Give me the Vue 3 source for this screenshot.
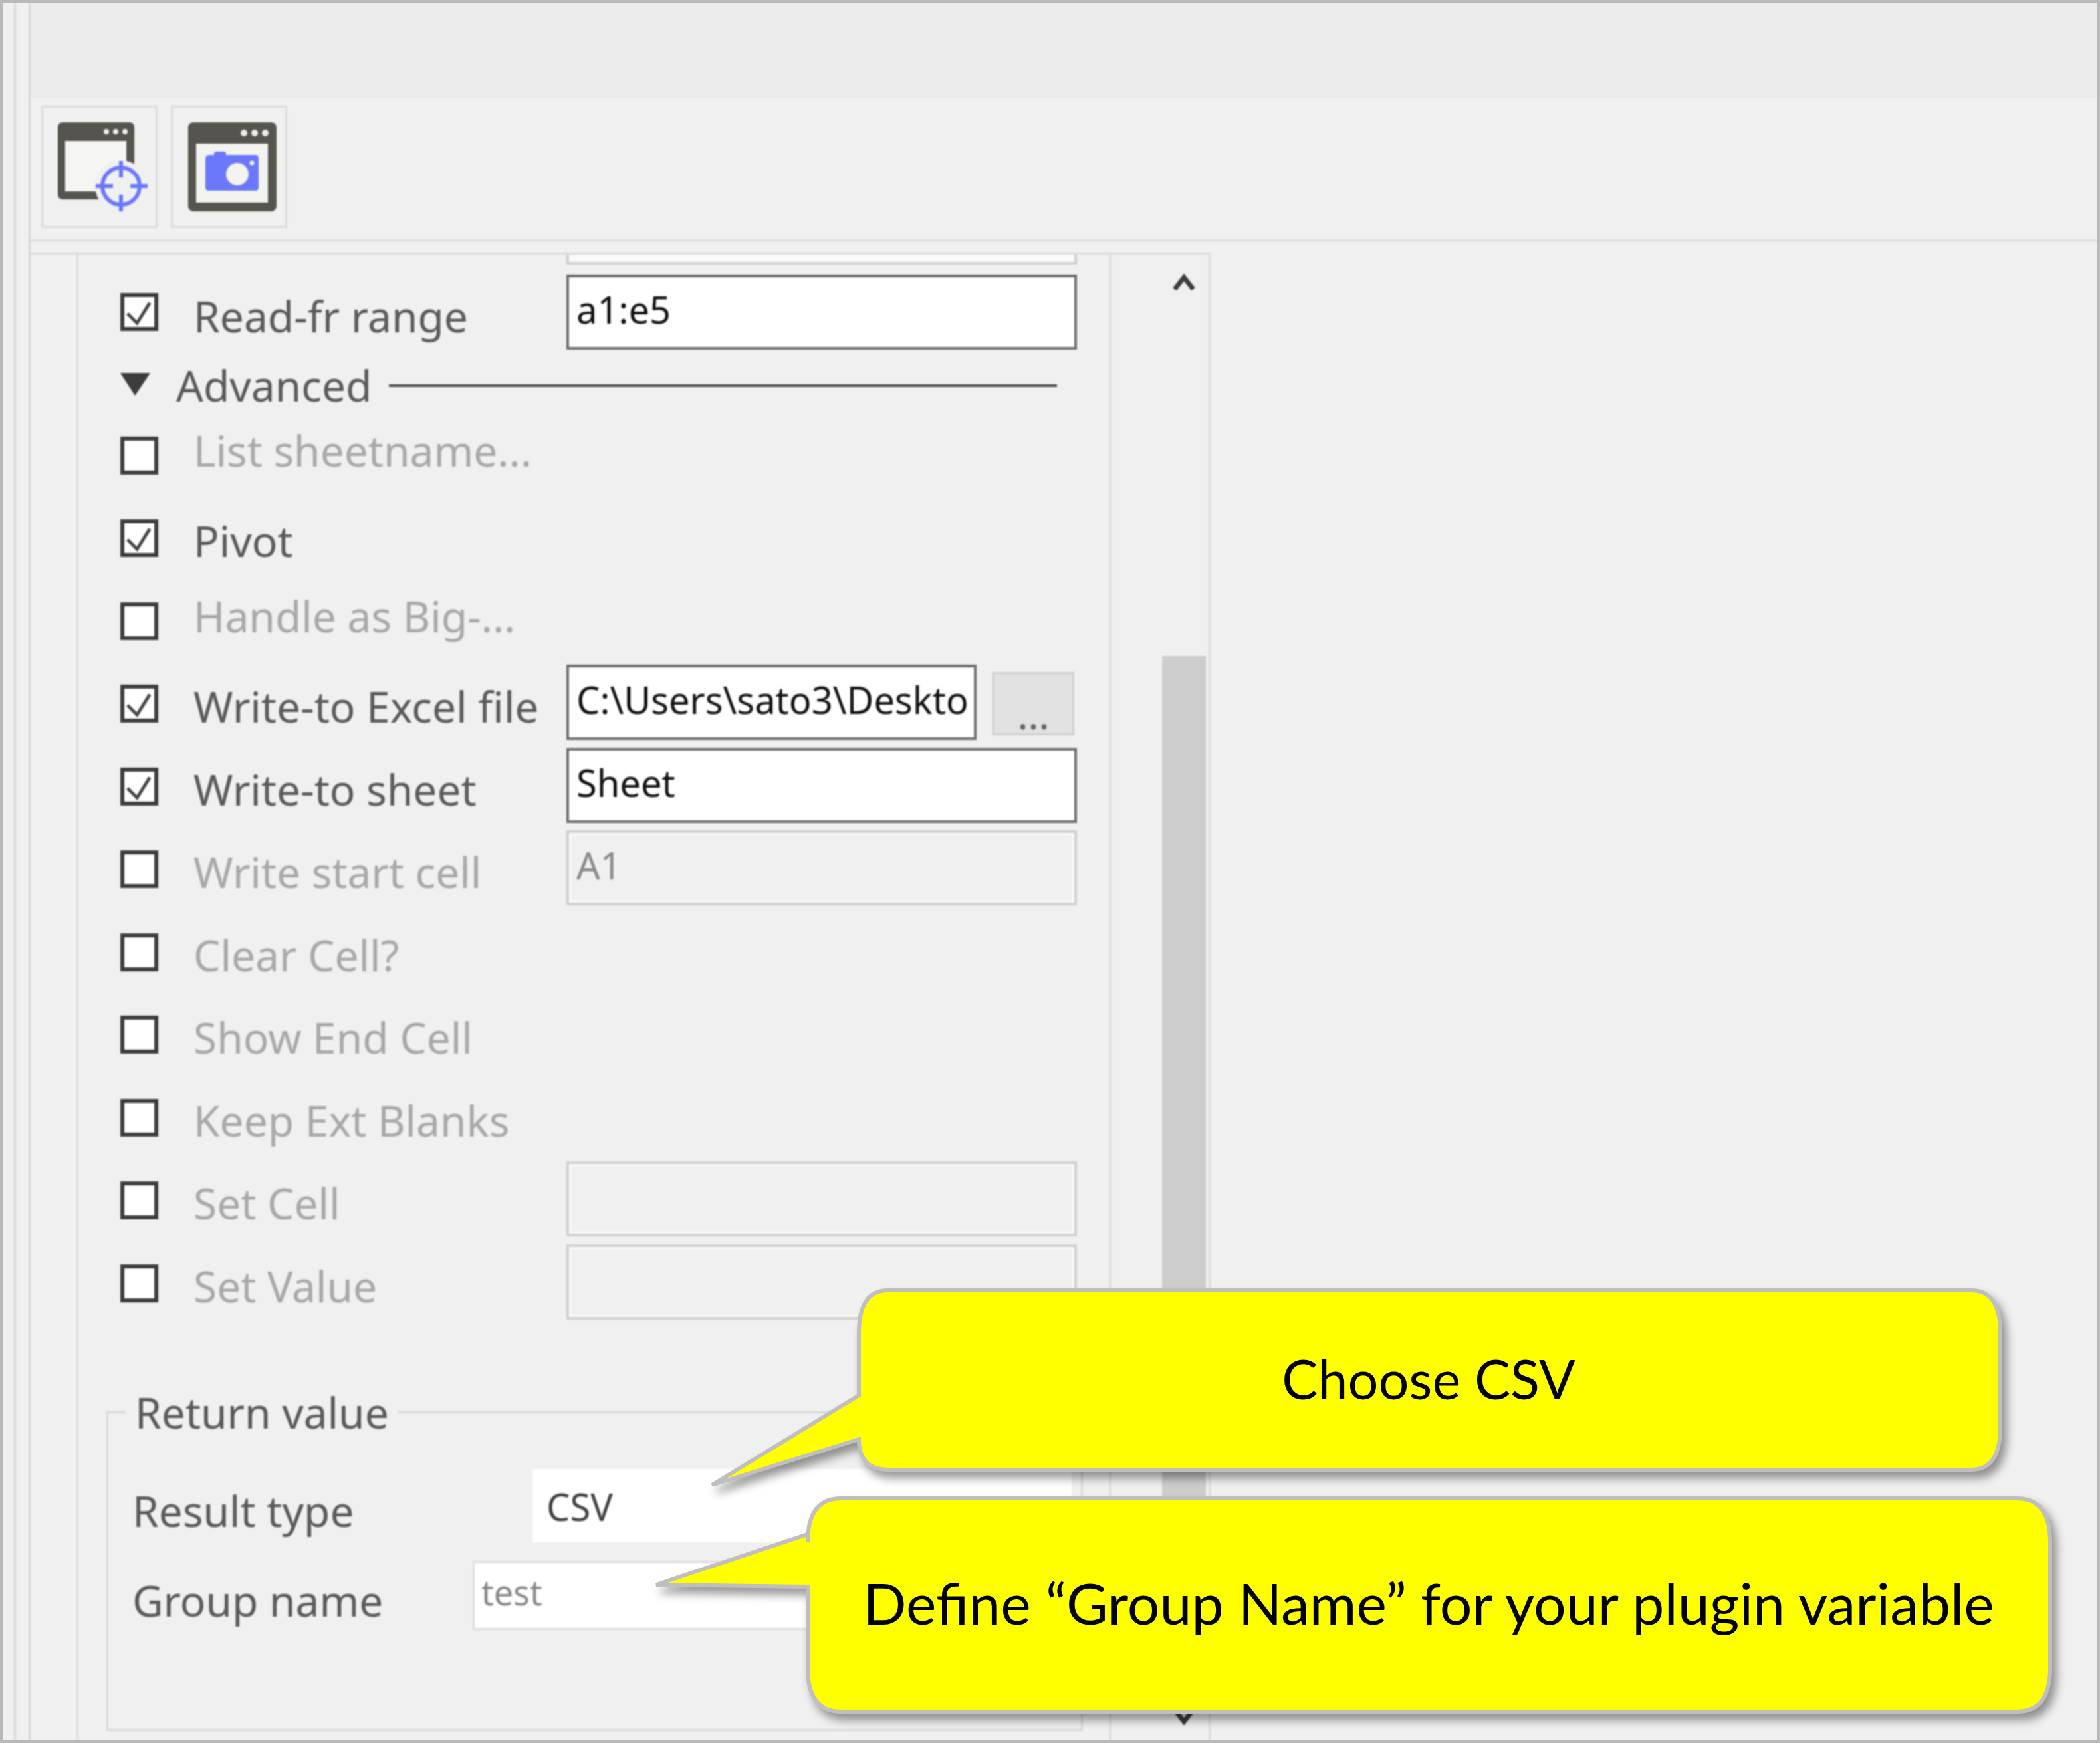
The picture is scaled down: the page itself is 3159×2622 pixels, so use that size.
<script setup>
const rows = [
  { label: 'List sheetname...', disabled: true, raised: true },
  { label: 'Pivot', checked: true },
  { label: 'Handle as Big-...', disabled: true, raised: true },
  { label: 'Write-to Excel file', checked: true, field: 'C:\\Users\\sato3\\Desktop', browse: true },
  { label: 'Write-to sheet', checked: true, field: 'Sheet' },
  { label: 'Write start cell', disabled: true, field: 'A1', fieldOff: true },
  { label: 'Clear Cell?', disabled: true },
  { label: 'Show End Cell', disabled: true },
  { label: 'Keep Ext Blanks', disabled: true },
  { label: 'Set Cell', disabled: true, field: '', fieldOff: true },
  { label: 'Set Value', disabled: true, field: '', fieldOff: true }
]
</script>

<template>
  <div class="screen">
    <div class="ui">
      <div class="rail"></div>
      <div class="rail rail-inner"></div>
      <div class="main">
        <div class="band"></div>
        <div class="toolbar">
          <button class="tool">
            <svg width="169" height="178" viewBox="3 3 169 178">
              <rect x="25" y="25" width="115" height="116" rx="7" fill="#56544e" />
              <rect x="36" y="53" width="92" height="76" fill="#f5f5f3" />
              <circle cx="98" cy="39" r="4" fill="#eee" />
              <circle cx="112" cy="39" r="4" fill="#eee" />
              <circle cx="126" cy="39" r="4" fill="#eee" />
              <circle cx="120" cy="121" r="39" fill="#f0f0f0" />
              <circle cx="120" cy="121" r="28" fill="none" stroke="#6b78fb" stroke-width="6" />
              <path d="M120 83v25M120 134v25M82 121h26M134 121h26" stroke="#6b78fb" stroke-width="6" />
            </svg>
          </button>
          <button class="tool">
            <svg width="169" height="178" viewBox="3 3 169 178">
              <rect x="26" y="25" width="133" height="134" rx="8" fill="#56544e" />
              <rect x="38" y="57" width="108" height="89" fill="#f3f3f0" />
              <circle cx="110" cy="41" r="5" fill="#eee" />
              <circle cx="126" cy="41" r="5" fill="#eee" />
              <circle cx="142" cy="41" r="5" fill="#eee" />
              <path d="M58 74h7v-2q0-3 3-3h12q3 0 3 3v2h44q5 0 5 5v44q0 5-5 5H57q-5 0-5-5V80q0-6 6-6z" fill="#6b78fb" />
              <circle cx="100" cy="103" r="17" fill="#f3f3f0" />
              <circle cx="122" cy="86" r="3.5" fill="#f3f3f0" />
            </svg>
          </button>
        </div>

        <div class="panel">
          <div class="gutter"></div>
          <div class="form">
            <div class="row row-stub">
              <div class="field field-off field-stub"></div>
            </div>

            <div class="row row-first">
              <span class="check"><svg width="45" height="45" viewBox="0 0 47 47"><path d="M5 26l15 15 20-32" fill="none" stroke="#444" stroke-width="5" /></svg></span>
              <span class="label">Read-fr range</span>
              <div class="field"><span class="field-text">a1:e5</span></div>
            </div>

            <div class="section">
              <svg class="caret" width="45" height="34" viewBox="0 0 45 34"><path d="M0 0h45L22 34z" fill="#3c3c3c" /></svg>
              <span class="section-title">Advanced</span>
              <span class="section-line"></span>
            </div>

            <div v-for="row in rows" :key="row.label" class="row">
              <span class="check">
                <svg v-if="row.checked" width="45" height="45" viewBox="0 0 47 47"><path d="M5 26l15 15 20-32" fill="none" stroke="#444" stroke-width="5" /></svg>
              </span>
              <span class="label" :class="{ off: row.disabled, raised: row.raised }">{{ row.label }}</span>
              <div v-if="row.field !== undefined" class="field-wrap">
                <div class="field" :class="{ 'field-off': row.fieldOff, 'field-short': row.browse }"><span class="field-text">{{ row.field }}</span></div>
                <button v-if="row.browse" class="browse">...</button>
              </div>
            </div>

            <fieldset class="group">
              <legend>Return value</legend>
              <div class="group-row">
                <span class="group-label wide">Result type</span>
                <div class="combo">CSV</div>
              </div>
              <div class="group-row second">
                <span class="group-label">Group name</span>
                <div class="name-field">test</div>
              </div>
            </fieldset>
          </div>

          <div class="scrollbar">
            <svg class="chevron-up" width="36" height="28" viewBox="0 0 36 28"><path d="M4 25L18 7l14 18" fill="none" stroke="#3c3c3c" stroke-width="7" /></svg>
            <div class="thumb"></div>
            <svg class="chevron-down" width="36" height="28" viewBox="0 0 36 28"><path d="M4 3l14 18L32 3" fill="none" stroke="#3c3c3c" stroke-width="7" /></svg>
          </div>
        </div>
      </div>
    </div>

    <svg class="callouts" width="3159" height="2622" viewBox="0 0 3159 2622">
      <path class="bubble" d="M1336 1941H2965Q3009 1941 3009 2005V2147Q3009 2211 2965 2211H1336Q1292 2211 1292 2165L1071 2234 1292 2099V2005Q1292 1941 1336 1941z" />
      <text x="2149" y="2105" class="bubble-text small">Choose CSV</text>
      <path class="bubble" d="M1265 2254H3034Q3084 2254 3084 2320V2509Q3084 2575 3034 2575H1265Q1215 2575 1215 2509V2387L987 2384 1215 2308V2320Q1215 2254 1265 2254z" />
      <text x="2149" y="2444" class="bubble-text">Define “Group Name” for your plugin variable</text>
    </svg>
  </div>
</template>

<style>
html, body {
  margin: 0;
  background: #f0f0f0;
}
</style>

<style scoped>
.screen {
  position: relative;
  width: 3159px;
  height: 2622px;
  overflow: hidden;
  box-sizing: border-box;
  border: 4px solid #b9b9b9;
  background: #f0f0f0;
  font-family: "Noto Sans", sans-serif;
}

.ui {
  display: flex;
  height: 100%;
  filter: blur(0.8px);
}

.rail {
  flex: none;
  width: 17px;
  border-right: 3px solid #d6d6d6;
}

.rail-inner {
  width: 19px;
}

.main {
  flex: 1;
  display: flex;
  flex-direction: column;
  min-width: 0;
}

.band {
  flex: none;
  height: 143px;
  background: #ebebeb;
}

.toolbar {
  flex: none;
  display: flex;
  gap: 20px;
  height: 216px;
  box-sizing: border-box;
  padding: 12px 0 0 16px;
  border-bottom: 3px solid #dcdcdc;
}

.tool {
  width: 175px;
  height: 184px;
  padding: 0;
  box-sizing: border-box;
  border: 3px solid #dcdcdc;
  background: #f0f0f0;
}

.tool svg {
  display: block;
}

.panel {
  flex: 1;
  display: flex;
  width: 1775px;
  box-sizing: border-box;
  margin-top: 17px;
  border-top: 3px solid #dcdcdc;
  border-right: 3px solid #dcdcdc;
  min-height: 0;
}

.gutter {
  flex: none;
  width: 69px;
  border-right: 3px solid #dcdcdc;
}

.form {
  flex: none;
  width: 1554px;
  box-sizing: border-box;
  padding-left: 63px;
  border-right: 3px solid #dcdcdc;
}

.row {
  display: grid;
  grid-template-columns: 57px 614px 768px;
  align-items: center;
  height: 124.5px;
}

.row-stub {
  height: 15px;
  align-items: start;
}

.row-first {
  height: 113px;
  margin-top: 15px;
}

.row-first .label {
  padding-top: 14px;
}

.check {
  display: block;
  width: 57px;
  height: 57px;
  box-sizing: border-box;
  border: 6px solid #3c3c3c;
  background: #fff;
}

.check svg {
  display: block;
}

.label {
  padding: 10px 0 0 53px;
  font-size: 64px;
  line-height: 1.2;
  color: #5a5a5a;
  white-space: nowrap;
}

.label.off {
  color: #a8a8a8;
}

.label.raised {
  padding-top: 0;
  margin-top: -14px;
}

.field-wrap {
  display: flex;
  align-items: center;
  grid-column: 3;
  margin-top: -4px;
}

.field {
  flex: 1;
  min-width: 0;
  width: 768px;
  height: 113px;
  box-sizing: border-box;
  padding: 0 8px 6px 11px;
  border: 4px solid #6e6e6e;
  background: #fff;
  color: #111;
  font-size: 56px;
  line-height: 96px;
}

.field-text {
  display: block;
  height: 100%;
  overflow: hidden;
  white-space: nowrap;
}

.row-stub .field,
.row-first .field {
  grid-column: 3;
}

.field-short {
  flex: none;
  width: 617px;
}

.field-off {
  border: 4px solid #d0d0d0;
  box-shadow: inset 0 0 0 3px #fafafa;
  background: #f0f0f0;
  color: #8a8a8a;
}

.field-stub {
  height: 15px;
  border-top: 0;
  padding: 0;
  background: #fafafa;
}

.browse {
  flex: none;
  width: 123px;
  height: 95px;
  margin: 4px 0 0 24px;
  padding: 30px 0 0;
  box-sizing: border-box;
  border: 3px solid #d0d0d0;
  background: #e1e1e1;
  color: #666;
  font-family: inherit;
  font-size: 60px;
  line-height: 50px;
}

.section {
  display: flex;
  align-items: center;
  width: 1409px;
  height: 60px;
  margin: 24px 0 13px;
}

.caret {
  flex: none;
  margin-top: -4px;
}

.section-title {
  margin-left: 39px;
  font-size: 64px;
  line-height: 60px;
  color: #5a5a5a;
}

.section-line {
  flex: 1;
  height: 4px;
  margin-left: 26px;
  background: #4a4a4a;
}

.group {
  width: 1469px;
  height: 509px;
  min-width: 0;
  margin: 102px 0 0 -21px;
  padding: 55px 14px 0 36px;
  box-sizing: border-box;
  border: 3px solid #d8d8d8;
}

.group legend {
  margin-left: -10px;
  padding: 0 14px;
  font-size: 64px;
  line-height: 60px;
  color: #5a5a5a;
}

.group-row {
  display: flex;
  align-items: center;
  height: 110px;
}

.group-row.second {
  height: 104px;
  margin-top: 28px;
}

.group-label {
  flex: none;
  width: 512px;
  padding-top: 16px;
  font-size: 64px;
  line-height: 70px;
  color: #5a5a5a;
}

.group-label.wide {
  width: 602px;
}

.combo {
  flex: 1;
  height: 110px;
  box-sizing: border-box;
  padding-left: 21px;
  background: #fff;
  color: #444;
  font-size: 56px;
  line-height: 112px;
}

.name-field {
  flex: 1;
  height: 104px;
  box-sizing: border-box;
  padding-left: 10px;
  border: 3px solid #dcdcdc;
  background: #fff;
  color: #888;
  font-size: 52px;
  line-height: 88px;
}

.scrollbar {
  flex: 1;
  display: flex;
  flex-direction: column;
  align-items: center;
  box-sizing: border-box;
  padding-left: 71px;
}

.chevron-up {
  flex: none;
  margin-top: 27px;
}

.thumb {
  flex: none;
  width: 66px;
  height: 1553px;
  margin-top: 549px;
  background: #cdcdcd;
}

.chevron-down {
  flex: none;
  margin-top: 29px;
}

.callouts {
  position: absolute;
  left: -4px;
  top: -4px;
}

.bubble {
  fill: #ffff00;
  stroke: #bfbfbf;
  stroke-width: 6px;
  filter: drop-shadow(7px 10px 7px rgba(0, 0, 0, 0.4));
}

.bubble-text {
  fill: #000;
  font-family: Lato, sans-serif;
  font-size: 86px;
  text-anchor: middle;
}

.bubble-text.small {
  font-size: 81px;
}
</style>
